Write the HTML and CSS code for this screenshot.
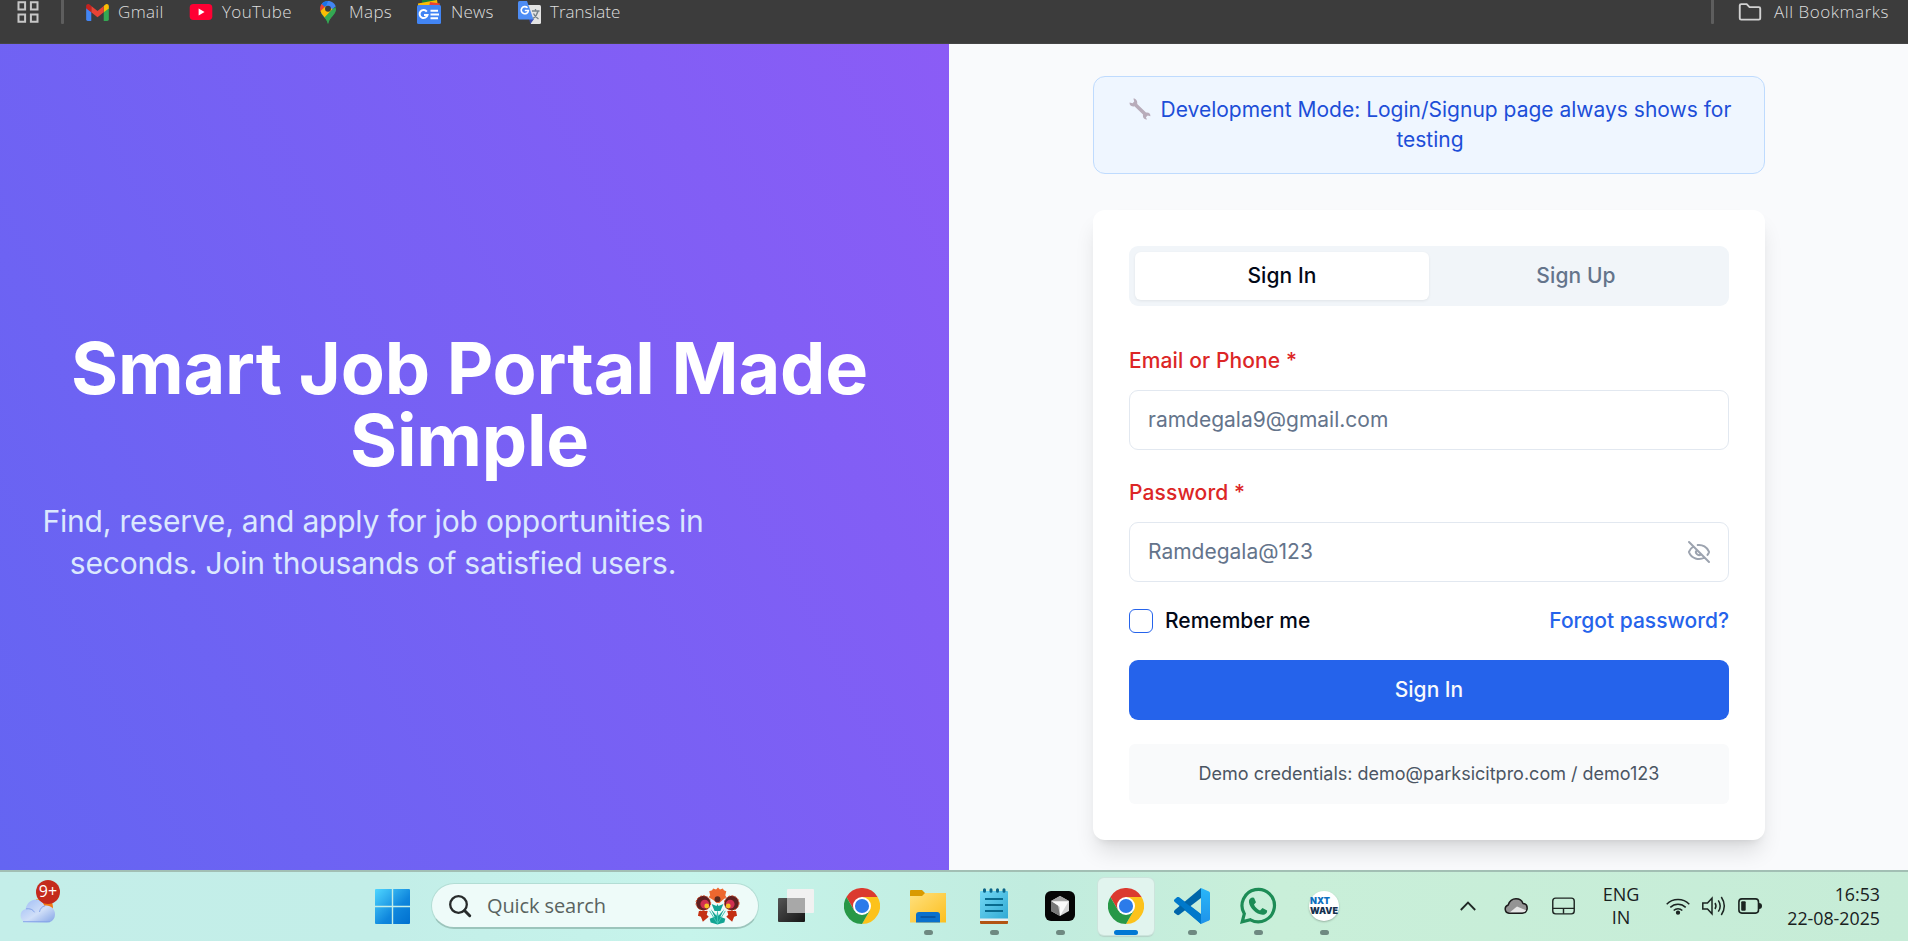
FILE: index.html
```html
<!DOCTYPE html>
<html lang="en">
<head>
<meta charset="utf-8">
<title>Smart Job Portal</title>
<link rel="stylesheet" href="styles.css">
</head>
<body>
<svg class="defs" width="0" height="0" aria-hidden="true">
  <defs>
    <linearGradient id="win" x1="0" y1="0" x2="1" y2="1"><stop offset="0" stop-color="#4fd6ff"/><stop offset=".6" stop-color="#0f86dd"/><stop offset="1" stop-color="#0070cf"/></linearGradient>
    <linearGradient id="cloud" x1="0" y1="0" x2="1" y2="1"><stop offset="0" stop-color="#9dbbf5"/><stop offset=".55" stop-color="#d0dff8"/><stop offset="1" stop-color="#83a3e6"/></linearGradient>
    <linearGradient id="folder" x1="0" y1="0" x2="1" y2="1"><stop offset="0" stop-color="#ffe07e"/><stop offset="1" stop-color="#fcbf1e"/></linearGradient>
    <linearGradient id="note" x1="0" y1="0" x2="1" y2="1"><stop offset="0" stop-color="#74d8f5"/><stop offset="1" stop-color="#2fa9d3"/></linearGradient>
    <linearGradient id="dark" x1="0" y1="0" x2="1" y2="1"><stop offset="0" stop-color="#555"/><stop offset="1" stop-color="#151515"/></linearGradient>
    <linearGradient id="code" x1="0" y1="0" x2="0" y2="1"><stop offset="0" stop-color="#29b6f8"/><stop offset="1" stop-color="#1f93ea"/></linearGradient>
    <symbol id="chrome" viewBox="0 0 48 48">
      <path fill="#db3a2f" d="M3.2 12A24 24 0 0 1 44.8 12H24L13.6 30Z"/>
      <path fill="#fcc21b" d="M44.8 12A24 24 0 0 1 24 48L34.4 30 24 12Z"/>
      <path fill="#279847" d="M24 48A24 24 0 0 1 3.2 12L13.6 30H34.4Z"/>
      <circle cx="24" cy="24" r="12" fill="#fff"/><circle cx="24" cy="24" r="9.4" fill="#2b7bea"/>
    </symbol>
  </defs>
</svg>

<header class="bookmarks">
  <svg class="bm-apps" viewBox="0 0 22 22" fill="none" stroke="#c7c7c7" stroke-width="2"><path d="M1.5 1.2h6.6v7.4H1.5zM13.9 1.2h6.6v7.4h-6.6zM1.5 13.4h6.6v7.4H1.5zM13.9 13.4h6.6v7.4h-6.6z"/></svg>
  <span class="bm-sep"></span>
  <a class="bm gmail"><svg viewBox="0 0 24 18"><path fill="#4285f4" d="M0 4v12.5Q0 18 1.6 18h3.8V8Z"/><path fill="#34a853" d="M24 4v12.5q0 1.5-1.6 1.5h-3.8V8Z"/><path fill="#fbbc04" d="M18.6 2.2v6.6L24 4.8V2.4C24 .2 21.6-.6 20 .9Z"/><path fill="#ea4335" d="M5.4 8.8V2.2L12 7.3l6.6-5.1v6.6L12 13.9Z"/><path fill="#c5221f" d="M0 2.4v2.4l5.4 4V2.2L4 .9C2.4-.6 0 .2 0 2.4Z"/></svg><span>Gmail</span></a>
  <a class="bm youtube"><svg viewBox="0 0 24 17"><rect width="24" height="17" rx="4" fill="#ff0033"/><path fill="#fff" d="M9.5 4.8v7.4l6.3-3.7Z"/></svg><span>YouTube</span></a>
  <a class="bm maps"><svg viewBox="0 0 16 23"><path fill="#34a853" d="M8 23C7 18 2.800 15.500 1 12L6 5l10 3C16 14 9.500 16 8 23Z"/><path fill="#4285f4" d="M8 0c4 0 7 2.600 7.700 5.600L4.500 14 1 4C3 1 5 0 8 0Z"/><path fill="#1a73e8" d="M1.700 3.200C3.200 1 5.200 0 8 0L5 8Z"/><path fill="#ea4335" d="M1.700 3C-.3 5-.2 8 .6 10.500L6 7Z"/><path fill="#fbbc04" d="M.5 10C1.500 13 3 14 4.600 16.500L12.500 8 6 5Z"/><path fill="#34a853" d="M15.600 6c1.200 5-3 8-4.600 10.500C9.300 18.800 8.600 21 8 23c-.6-2.500-1.600-4.600-3.400-6.500Z"/><circle cx="8" cy="7.700" r="3" fill="#3c3c3c"/></svg><span>Maps</span></a>
  <a class="bm news"><svg viewBox="0 0 24 24"><path fill="#188038" d="M5 0h14v5H5z"/><path fill="#fbbc04" d="M1 3.500 20 0l1 6H1z"/><path fill="#ea4335" d="m13 2 10 1.500L22 7H12z"/><rect y="5" width="24" height="19" rx="1.500" fill="#4285f4"/><path d="M9.800 11.600A4 4 0 1 0 10.500 15H7M13.500 10.800H21M13.500 14.500h8.500M13.500 18.200H21" stroke="#fff" stroke-width="2" fill="none"/></svg><span>News</span></a>
  <a class="bm translate"><svg viewBox="0 0 23 23"><path fill="#e3e3e3" d="M9 4h12.500Q23 4 23 5.500v16q0 1.500-1.500 1.500H13Z"/><path fill="#3949ab" d="M11 18h5l-3.600 5Z"/><path fill="#4e8df5" d="M1.500 0H9l6.500 18.500H1.500Q0 18.500 0 17V1.500Q0 0 1.500 0Z"/><path d="M9.500 6.800A3.600 3.600 0 1 0 10.400 9.500H6.800" stroke="#fff" stroke-width="1.600" fill="none"/><path d="M14 10h7.500M17.500 8v2M20 10c-.8 4-3 6-5 7.500M15.500 12.500c1 2.500 3 4 5 5.500" stroke="#75828a" stroke-width="1.300" fill="none"/></svg><span>Translate</span></a>
  <span class="bm-sep end"></span>
  <a class="bm all"><svg viewBox="0 0 24 19" fill="none" stroke="#d2d2d2" stroke-width="2"><path d="M1.200 2.700Q1.200 1.200 2.700 1.200H8.500L11.500 4.300H21.300Q22.800 4.300 22.800 5.800V16Q22.800 17.500 21.300 17.500H2.700Q1.200 17.500 1.200 16Z"/></svg><span>All Bookmarks</span></a>
</header>

<main class="page">
  <section class="hero">
    <h1>Smart Job Portal Made<br>Simple</h1>
    <p>Find, reserve, and apply for job opportunities in<br>seconds. Join thousands of satisfied users.</p>
  </section>
  <section class="auth">
    <div class="notice">
      <svg class="wrench" viewBox="0 0 22 22"><path fill="#b8acba" d="M4.400.4 5.200 3.400 3.600 5.200.6 4.500C.2 7 2.200 9 5.400 8.200L14 16.600C13.500 19.600 15.200 21.800 18 21.400L16.900 19.200 18.700 17.400 21.400 18.300C21.700 15.500 19.700 14 17 14.500L8.200 6C8.800 2.800 7 .3 4.400.4Z"/></svg>
      <span>Development Mode: Login/Signup page always shows for</span><br>testing
    </div>
    <form class="card">
      <div class="tabs"><div class="tab active">Sign In</div><div class="tab">Sign Up</div></div>
      <label class="label">Email or Phone *</label>
      <div class="input">ramdegala9@gmail.com</div>
      <label class="label second">Password *</label>
      <div class="input"><span>Ramdegala@123</span>
        <svg class="eye" viewBox="0 0 24 24" fill="none" stroke="#9ca3af" stroke-width="2" stroke-linecap="round" stroke-linejoin="round"><path d="M10.733 5.076a10.744 10.744 0 0 1 11.205 6.575 1 1 0 0 1 0 .696 10.747 10.747 0 0 1-1.444 2.490M14.084 14.158a3 3 0 0 1-4.242-4.242M17.479 17.499a10.750 10.750 0 0 1-15.417-5.151 1 1 0 0 1 0-.696 10.750 10.750 0 0 1 4.446-5.143M2 2l20 20"/></svg>
      </div>
      <div class="options"><span class="checkbox"></span><span class="remember">Remember me</span><a class="forgot">Forgot password?</a></div>
      <div class="submit">Sign In</div>
      <div class="demo">Demo credentials: demo@parksicitpro.com / demo123</div>
    </form>
  </section>
</main>

<footer class="taskbar">
  <div class="weather">
    <svg viewBox="0 0 36 26"><circle cx="26" cy="10" r="8" fill="#f27a13"/><path fill="#f8b51e" d="M17 2h6v6h-6z"/><path fill="url(#cloud)" d="M7 25.500a7 7 0 0 1-.5-13.500C8 6 12 2.500 17 2.500c4.500 0 7 2.500 8.300 6.200C31 7.500 36 11.500 36 17s-3.500 8.500-8 8.500Z"/><path fill="none" stroke="#86a5e9" d="M7 11.800c4-.5 7 .6 8.500 3.500M20.500 15c.5-3.500 2.600-5.500 5.500-6.200M4 24.700h27"/></svg>
    <span class="badge">9+</span>
  </div>
  <svg class="start" viewBox="0 0 35 35"><path fill="url(#win)" d="M1 0h15.800v16.800H0V1Q0 0 1 0ZM18.200 0H34q1 0 1 1v15.800H18.200ZM0 18.200h16.800V35H1q-1 0-1-1ZM18.200 18.200H35V34q0 1-1 1H18.200Z"/></svg>
  <div class="search">
    <svg class="lens" viewBox="0 0 22 22" fill="none" stroke="#272b2b"><circle cx="9.500" cy="9.500" r="8.300" stroke-width="2.300"/><path d="m15.500 15.500 5.200 5.200" stroke-width="3" stroke-linecap="round"/></svg>
    <span>Quick search</span>
    <svg class="flower" viewBox="0 0 44 38">
      <path fill="#ed672f" d="m13.500 4 3-1 1-2 3 1 2-2 2 2 3-1 1 2 2.500 1-1 4 1 2-4 3-3 3h-3l-3-3-5-3 1.500-2Z"/>
      <path fill="#c42f12" d="M3 24h9l-1 4 2 2-6 5-2-5-3-1ZM41 24h-9l1 4-2 2 6 5 2-5 3-1Z"/>
      <circle cx="7.500" cy="16" r="7.500" fill="#5f1f20" stroke="#dc4a22" stroke-dasharray="2 1.500"/><circle cx="36.500" cy="16" r="7.500" fill="#5f1f20" stroke="#dc4a22" stroke-dasharray="2 1.500"/>
      <circle cx="9" cy="17" r="4.500" fill="#cf2f50"/><circle cx="35" cy="17" r="4.500" fill="#cf2f50"/><circle cx="11" cy="19" r="2.500" fill="#f5c224"/><circle cx="33" cy="19" r="2.500" fill="#f5c224"/>
      <circle cx="22" cy="12" r="3" fill="#5b2a20"/><path fill="#12a493" d="m16 17 5 2 1-2 1 2 5-2-3 7h-6ZM14 32l5-2-4-8 6 7 1-6 1 6 6-7-4 8 5 2-1 4-7 2-7-2Z"/><path fill="none" stroke="#40c5b4" d="m22 37-8-13M22 37l8-13M22 37V25"/>
    </svg>
  </div>
  <nav class="apps">
    <div class="app"><svg class="i36" viewBox="0 0 36 36"><rect y="10" width="27" height="24" rx="1" fill="url(#dark)"/><rect x="9" y="1" width="27" height="24" rx="1" fill="#f1f1f1"/><path fill="#a8a8a8" d="M9 10h18v15H9z"/></svg></div>
    <div class="app"><svg class="i36"><use href="#chrome"/></svg></div>
    <div class="app open"><svg class="i36" viewBox="0 0 36 36"><path fill="#d99a00" d="M0 3q0-1 1-1h11l3 3h20q1 0 1 1v6H0Z"/><path fill="url(#folder)" d="M0 8h12l3-3h21v29.500H0Z"/><path fill="#0a70cc" d="M6 34.500V27q0-3 3-3h18q3 0 3 3v7.500Z"/><path stroke="#07509c" stroke-width="1.600" d="M10.500 29h15"/></svg></div>
    <div class="app open"><svg class="i36" viewBox="0 0 36 36"><rect x="4" y="3" width="28" height="29" rx="1" fill="url(#note)"/><path fill="#e9eef0" d="M4 30.500h28V33H4z"/><path fill="#b25413" d="M4 33h28v2q0 1-1 1H5q-1 0-1-1Z"/><path stroke="#086a8e" stroke-width="2" d="M9 11h18M9 17h18M9 23h18"/><path stroke="#0b6488" stroke-width="3" stroke-linecap="round" d="M8.500 1.800v1.500M15 1.800v1.500M21.500 1.800v1.500M28 1.800v1.500"/></svg></div>
    <div class="app open"><svg class="i36" viewBox="0 0 36 36"><rect x="3" y="3" width="30" height="30" rx="6" fill="#050505"/><path fill="#d3d3d3" d="m18 8 9 5v10l-9 5-9-5V13Z"/><path fill="#777" d="M9 13v10l9 5-2-11Z"/><path fill="#a5a5a5" d="m18 8 9 5H9Z"/><path fill="#fafafa" d="M10 13.500h16.500L18 28v-9Z"/></svg></div>
    <div class="app open current"><svg class="i36"><use href="#chrome"/></svg></div>
    <div class="app open"><svg class="i36" viewBox="0 0 36 36"><path fill="#0079cb" d="M0 12 3 9.300q1-.7 2.200 0L27 26v10L.8 14Q-.4 13 0 12Z"/><path fill="#0065a9" d="m0 24.500 3 2.300q1 .7 2.200 0L27 10V0L.8 22Q-.4 23.300 0 24.500Z"/><path fill="#0079cb" d="m.3 12 3.500-3L27 26.500V36Z"/><path fill="url(#code)" d="m27 0 8 3.500q1 .5 1 1.500v26q0 1-1 1.500L27 36Z"/></svg></div>
    <div class="app open"><svg class="i36" viewBox="0 0 36 36"><path fill="none" stroke="#1d8c56" stroke-width="3.200" d="M2.200 33.800 4.300 25.800A16.200 16.200 0 1 1 10.500 31.800Z"/><path fill="#1d8c56" d="M12 9.500c-2 .5-3.500 2.500-3 5C10 20.500 16 26 22.500 26.800c2.500.3 5-1.800 4.600-4.300L22.500 20l-2.500 2.400c-2.500-1-5-3.400-6-6l2-2.200-2-4.500Z"/></svg></div>
    <div class="app open"><div class="nxt"><b>NXT</b><b>WAVE</b></div></div>
  </nav>
  <div class="tray">
    <svg class="chev" viewBox="0 0 16 10" fill="none" stroke="#202825" stroke-width="1.800"><path d="m.8 9 7.200-7.400L15.200 9"/></svg>
    <svg class="drive" viewBox="0 0 24 16"><path fill="#949494" d="M5 15.200a4.200 4.200 0 0 1-.8-8.200C5.500 3 8.500.8 12 .8c3.200 0 6 2 7 4.600 2.600.3 4.200 2.300 4.200 4.800 0 2.800-2 5-5 5Z"/><path fill="#e6e6e6" d="m5 15 8-6.500 9.500 4-1.500 2Z"/><path fill="none" stroke="#1b1b1b" stroke-width="1.500" d="M5 15.200a4.200 4.200 0 0 1-.8-8.200C5.500 3 8.500.8 12 .8c3.200 0 6 2 7 4.600 2.600.3 4.200 2.300 4.200 4.800 0 2.800-2 5-5 5Z"/></svg>
    <svg class="pad" viewBox="0 0 24 18" fill="none" stroke="#1f2623" stroke-width="1.500"><rect x=".8" y=".8" width="22.400" height="16.400" rx="3"/><path d="M1 11.500h22M12 11.500V17"/></svg>
    <div class="lang"><span>ENG</span><span>IN</span></div>
    <svg class="wifi" viewBox="0 0 24 18" fill="none" stroke="#1b2421" stroke-width="1.500"><path d="M.7 7.200a16 16 0 0 1 22.600 0M4.300 10.400a11 11 0 0 1 15.400 0M7.700 13.500a6.200 6.200 0 0 1 8.600 0"/><circle cx="12" cy="15.700" r="1.400" fill="#1b2421"/></svg>
    <svg class="sound" viewBox="0 0 24 20" fill="none" stroke="#1b2421" stroke-width="1.500"><path d="M.8 7h4.700L10 2.200v15.600L5.500 13H.8ZM13 7q2 3 0 6M16.300 4.300q3.800 5.700 0 11.400M19.300 1q6 9 0 18"/></svg>
    <svg class="battery" viewBox="0 0 24 16"><rect x=".9" y=".9" width="19.600" height="14.200" rx="3" fill="none" stroke="#1b2421" stroke-width="1.600"/><rect x="3.200" y="3.200" width="4.500" height="9.600" rx="1" fill="#1b2421"/><path fill="#1b2421" d="M21 5q3 0 3 3t-3 3Z"/></svg>
    <div class="clock"><span>16:53</span><span>22-08-2025</span></div>
  </div>
</footer>
</body>
</html>
```
FILE: styles.css
```css
* { box-sizing: border-box; }
body { margin: 0; width: 1908px; height: 941px; overflow: hidden; display: flex; flex-direction: column; font-family: Inter, "Liberation Sans", sans-serif; }
svg { display: block; flex: none; overflow: visible; }
.defs { position: absolute; }

.bookmarks { height: 44px; flex: none; background: #3c3c3c; border-bottom: 1px solid #454545; display: flex; align-items: flex-start; padding-left: 17px; font: 300 17px/24px "Open Sans", "Noto Sans", sans-serif; letter-spacing: .35px; color: #dedede; }
.bm-apps { width: 22px; height: 22px; margin-top: 1px; }
.bm-sep { width: 3px; height: 24px; margin-left: 22px; background: #5e5e5e; border-radius: 0 0 1px 1px; }
.bm { height: 24px; display: flex; align-items: center; white-space: nowrap; }
.bm svg { width: 24px; margin-right: 9px; }
.gmail { margin-left: 22px; width: 103px; }
.gmail svg { width: 23px; height: 17px; }
.youtube { width: 131px; }
.youtube svg { height: 16px; }
.maps { width: 97px; }
.maps svg { width: 16px; height: 23px; margin-right: 13px; }
.news { width: 101px; letter-spacing: .2px; }
.news svg { height: 24px; margin-right: 10px; }
.translate { letter-spacing: 0; }
.translate svg { width: 23px; height: 23px; margin-right: 9px; }
.bm-sep.end { margin-left: auto; }
.all { margin-left: 24px; width: 170px; letter-spacing: .55px; }
.all svg { height: 18px; margin-right: 12px; }

.page { height: 826px; flex: none; display: flex; background: #f9fafc; }
.hero { width: 949px; padding: 2px 46px 0 36px; display: flex; flex-direction: column; justify-content: center; background: linear-gradient(63deg, #6465f2 0%, #8b5cf6 100%); color: #fff; }
.hero h1 { margin: 0; font-size: 72px; line-height: 72px; font-weight: 700; letter-spacing: -.17px; text-align: center; white-space: nowrap; }
.hero p { margin: 24px 0 0; width: 674px; font-size: 30px; line-height: 42px; letter-spacing: -.2px; text-align: center; color: #dbe8fe; white-space: nowrap; }
.auth { flex: 1; display: flex; flex-direction: column; align-items: flex-start; padding: 32px 0 0 144px; overflow: hidden; }
.notice { width: 672px; height: 98px; padding: 18px 10px 18px 12px; border: 1px solid #bfdbfe; border-radius: 12px; background: #eff6ff; color: #1d4ed8; font-size: 21px; line-height: 30px; text-align: center; white-space: nowrap; }
.wrench { display: inline-block; width: 22px; height: 22px; margin-right: 4px; vertical-align: -3px; }
.card { margin-top: 36px; width: 672px; height: 630px; padding: 36px; border-radius: 12px; background: #fff; box-shadow: 0 15px 22px -4px rgba(0,0,0,.12), 0 6px 9px -6px rgba(0,0,0,.12); display: flex; flex-direction: column; font-size: 21px; line-height: 30px; color: #020817; }
.tabs { height: 60px; padding: 6px; display: flex; background: #f1f5f9; border-radius: 9px; }
.tab { flex: 1; display: flex; align-items: center; justify-content: center; font-weight: 500; letter-spacing: .1px; color: #64748b; border-radius: 6px; }
.tab.active { background: #fff; color: #020817; box-shadow: 0 1px 3px rgba(0,0,0,.07); }
.label { margin: 40px 0 14px; color: #dc2626; font-weight: 500; letter-spacing: .12px; }
.label.second { margin: 28px 0 14px; }
.input { height: 60px; padding: 0 17px 0 18px; display: flex; align-items: center; justify-content: space-between; border: 1px solid #e2e8f0; border-radius: 9px; color: #64748b; }
.eye { width: 24px; height: 24px; }
.options { display: flex; align-items: center; height: 30px; margin: 24px 0; font-weight: 500; }
.checkbox { width: 24px; height: 24px; border: 1px solid #2563eb; border-radius: 6px; margin-right: 12px; }
.forgot { margin-left: auto; color: #2563eb; }
.submit { height: 60px; display: flex; align-items: center; justify-content: center; border-radius: 9px; background: #2563eb; color: #f8fafc; font-weight: 500; }
.demo { height: 60px; margin-top: 24px; display: flex; align-items: center; justify-content: center; border-radius: 6px; background: #f9fafb; color: #4b5563; font-size: 18px; }

.taskbar { height: 71px; flex: none; border-top: 2px solid #a2bfb4; background: linear-gradient(90deg, #c4eee9 0, #c3eee8 20%, #c6f4eb 36%, #c1ecdf 54%, #c9efd9 67%, #c6ecd7 100%); display: flex; align-items: flex-start; font-family: "Open Sans", "Noto Sans", sans-serif; color: #18211e; }
.weather { position: relative; width: 375px; flex: none; padding: 25px 0 0 19px; }
.weather svg { width: 36px; height: 26px; }
.badge { position: absolute; left: 36px; top: 8px; width: 24px; height: 24px; border-radius: 50%; background: #c42b1c; color: #fff; font-size: 16px; line-height: 23px; text-align: center; }
.start { width: 35px; height: 35px; margin-top: 17px; }
.search { margin: 11px 0 0 21px; width: 328px; height: 46px; padding-left: 17px; border: 1px solid #b2ddd4; border-bottom: 2px solid #9cc5bc; border-radius: 23px; background: #eefbf9; display: flex; align-items: center; font-size: 20px; letter-spacing: -.1px; color: #596360; }
.lens { width: 22px; height: 22px; margin-right: 16px; }
.flower { width: 43px; height: 38px; margin: 0 19px 0 auto; }
.apps { display: flex; margin: 6px 0 0 4px; }
.app { position: relative; width: 66px; height: 57px; display: flex; justify-content: center; padding-top: 10px; }
.i36 { width: 36px; height: 36px; }
.app.open::after { content: ""; position: absolute; left: 29px; top: 52px; width: 9px; height: 5px; border-radius: 3px; background: #6e8981; }
.app.current { width: 56px; margin: 0 5px; background: #e1f4ee; border-radius: 6px; box-shadow: 0 0 0 1px #cce4dc, 0 2px 1px #b6d2c8; }
.app.current::after { left: 16px; width: 24px; background: #0078d4; }
.nxt { width: 30px; height: 30px; margin-top: 3px; border-radius: 50%; background: #fff; display: flex; flex-direction: column; align-items: center; justify-content: center; font: 900 9px/10px Inter, sans-serif; color: #16324f; box-shadow: 0 1px 2px rgba(0,0,0,.25); }
.nxt b:first-child { color: #0d6fbe; margin-right: 8px; }
.nxt b { font-weight: 900; }
.tray { flex: 1; display: flex; height: 69px; padding: 0 28px 2px 0; align-items: center; justify-content: flex-end; }
.chev { width: 16px; height: 10px; margin-right: 28px; }
.drive { width: 24px; height: 16px; margin-right: 24px; }
.pad { width: 23px; height: 18px; margin-right: 28px; }
.lang { width: 36px; display: flex; flex-direction: column; align-items: center; font-size: 18px; line-height: 23px; margin-right: 27px; }
.wifi { width: 24px; height: 18px; margin-right: 12px; }
.sound { width: 24px; height: 20px; margin-right: 12px; }
.battery { width: 24px; height: 16px; margin-right: 18px; }
.clock { width: 100px; display: flex; flex-direction: column; align-items: flex-end; font-size: 17.800px; line-height: 24px; }
```
